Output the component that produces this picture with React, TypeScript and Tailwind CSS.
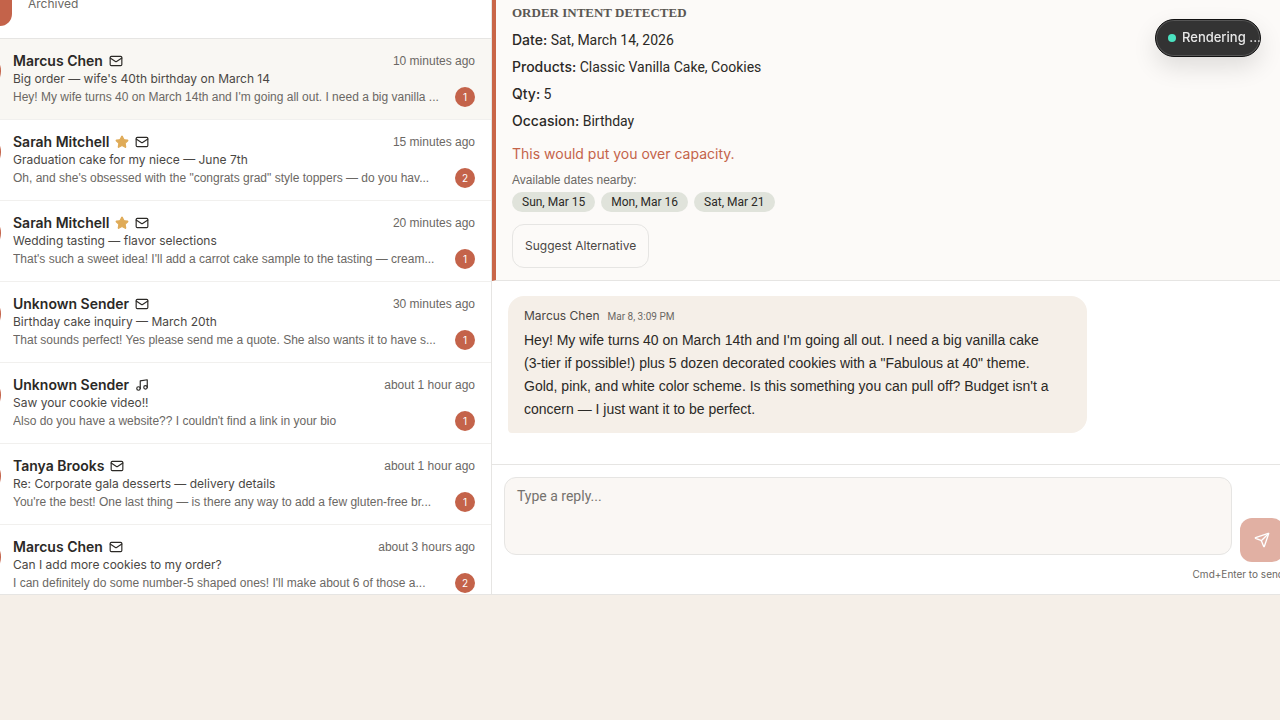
import React, { useState } from 'react';
import { Mail, Music, Send, Star } from 'lucide-react';

interface Conversation {
  id: number;
  sender: string;
  subject: string;
  preview: string;
  time: string;
  unread: number;
  vip?: boolean;
  channel: 'email' | 'tiktok';
}

const conversations: Conversation[] = [
  {
    id: 1,
    sender: 'Marcus Chen',
    subject: "Big order — wife's 40th birthday on March 14",
    preview: "Hey! My wife turns 40 on March 14th and I'm going all out. I need a big vanilla ...",
    time: '10 minutes ago',
    unread: 1,
    channel: 'email',
  },
  {
    id: 2,
    sender: 'Sarah Mitchell',
    subject: 'Graduation cake for my niece — June 7th',
    preview: 'Oh, and she\'s obsessed with the "congrats grad" style toppers — do you hav...',
    time: '15 minutes ago',
    unread: 2,
    vip: true,
    channel: 'email',
  },
  {
    id: 3,
    sender: 'Sarah Mitchell',
    subject: 'Wedding tasting — flavor selections',
    preview: "That's such a sweet idea! I'll add a carrot cake sample to the tasting — cream...",
    time: '20 minutes ago',
    unread: 1,
    vip: true,
    channel: 'email',
  },
  {
    id: 4,
    sender: 'Unknown Sender',
    subject: 'Birthday cake inquiry — March 20th',
    preview: 'That sounds perfect! Yes please send me a quote. She also wants it to have s...',
    time: '30 minutes ago',
    unread: 1,
    channel: 'email',
  },
  {
    id: 5,
    sender: 'Unknown Sender',
    subject: 'Saw your cookie video!!',
    preview: "Also do you have a website?? I couldn't find a link in your bio",
    time: 'about 1 hour ago',
    unread: 1,
    channel: 'tiktok',
  },
  {
    id: 6,
    sender: 'Tanya Brooks',
    subject: 'Re: Corporate gala desserts — delivery details',
    preview: "You're the best! One last thing — is there any way to add a few gluten-free br...",
    time: 'about 1 hour ago',
    unread: 1,
    channel: 'email',
  },
  {
    id: 7,
    sender: 'Marcus Chen',
    subject: 'Can I add more cookies to my order?',
    preview: "I can definitely do some number-5 shaped ones! I'll make about 6 of those a...",
    time: 'about 3 hours ago',
    unread: 2,
    channel: 'email',
  },
];

const orderDetails = [
  { label: 'Date', value: 'Sat, March 14, 2026' },
  { label: 'Products', value: 'Classic Vanilla Cake, Cookies' },
  { label: 'Qty', value: '5' },
  { label: 'Occasion', value: 'Birthday' },
];

const nearbyDates = ['Sun, Mar 15', 'Mon, Mar 16', 'Sat, Mar 21'];

const ConversationRow: React.FC<{ item: Conversation; active: boolean; onSelect: () => void }> = ({
  item,
  active,
  onSelect,
}) => {
  const ChannelIcon = item.channel === 'email' ? Mail : Music;

  return (
    <button
      type="button"
      onClick={onSelect}
      className={`flex w-full shrink-0 items-center gap-3 border-b border-[#f1f0ee] py-3 pr-4 pl-4 text-left ${
        active ? 'bg-[#f9f7f3]' : 'bg-white'
      }`}
    >
      <span className="-mt-4 size-10 shrink-0 rounded-full bg-[#c4634a]" />
      <span className="flex min-w-0 flex-1 flex-col">
        <span className="flex h-5 items-center">
          <span className="font-[Inter,sans-serif] text-sm font-semibold text-[#2b2926]">{item.sender}</span>
          {item.vip && <Star className="ml-1.5 size-3.5 fill-[#dfab58] text-[#dfab58]" />}
          <ChannelIcon className="ml-1.5 size-3.5 text-[#2b2926]" />
          <span className="ml-auto text-xs text-[#6b6864]">{item.time}</span>
        </span>
        <span className="truncate font-[Inter,sans-serif] text-xs text-[#4a4744]">{item.subject}</span>
        <span className="flex h-5 items-center gap-2">
          <span className="min-w-0 flex-1 truncate text-xs text-[#6b6864]">{item.preview}</span>
          <span className="flex size-5 shrink-0 items-center justify-center rounded-full bg-[#c4634a] font-[Inter,sans-serif] text-[10px] text-white">
            {item.unread}
          </span>
        </span>
      </span>
    </button>
  );
};

const OrderIntent: React.FC = () => (
  <section className="border-b border-l-4 border-b-[#e6e5e3] border-l-[#c96547] bg-[#fcfaf8] px-4 pt-[5px] pb-3">
    <h2 className="mb-2 font-['Liberation_Serif',serif] text-[13px] leading-4 font-bold text-[#5a5753]">
      ORDER INTENT DETECTED
    </h2>
    <div className="flex flex-col gap-[5px] font-[Roboto,sans-serif]">
      {orderDetails.map((row) => (
        <p key={row.label} className="text-sm leading-[22px] text-[#2b2926]">
          <span className="font-[Inter,sans-serif] font-medium">{row.label}:</span> {row.value}
        </p>
      ))}
    </div>
    <p className="mt-3 font-[Inter,sans-serif] text-sm text-[#c4634a]">This would put you over capacity.</p>
    <p className="mt-2 text-xs text-[#6b6864]">Available dates nearby:</p>
    <div className="mt-1 flex gap-1.5 font-[Roboto,sans-serif]">
      {nearbyDates.map((date) => (
        <span key={date} className="rounded-full bg-[#e0e3db] px-2.5 text-xs leading-5 text-[#2b2926]">
          {date}
        </span>
      ))}
    </div>
    <button
      type="button"
      className="mt-3 h-11 rounded-xl border border-[#e6e5e3] px-3 font-[Inter,sans-serif] text-xs text-[#4a4744]"
    >
      Suggest Alternative
    </button>
  </section>
);

const ReplyForm: React.FC = () => {
  const [reply, setReply] = useState('');

  return (
    <form className="border-t border-[#e6e5e3] p-3" onSubmit={(e) => e.preventDefault()}>
      <div className="flex items-end gap-2">
        <div className="h-[85px] min-w-0 flex-1">
          <textarea
            aria-label="Reply"
            placeholder="Type a reply..."
            value={reply}
            onChange={(e) => setReply(e.target.value)}
            className="block h-[78px] w-full resize-none rounded-xl border border-[#e6e5e3] bg-[#faf7f4] px-3 py-2 font-[Roboto,sans-serif] text-sm text-[#2b2926] placeholder:text-[#75726e]"
          />
        </div>
        <button
          type="submit"
          aria-label="Send reply"
          disabled={!reply}
          className="flex size-11 shrink-0 items-center justify-center rounded-xl bg-[#c4634a] text-white disabled:opacity-50"
        >
          <Send className="size-4" />
        </button>
      </div>
      <p className="mt-1 text-right font-[Inter,sans-serif] text-[10px] leading-4 text-[#6b6864]">Cmd+Enter to send</p>
    </form>
  );
};

export default function App() {
  const [selected, setSelected] = useState(1);

  return (
    <div className="min-h-screen overflow-hidden bg-[#f5efe8] font-['Liberation_Sans',sans-serif] text-[#2b2926]">
      <div className="-mr-4 -ml-[55px] flex h-[calc(100vh-125px)] border-b border-[#e6e5e3] bg-white">
        <aside className="flex w-[547px] shrink-0 flex-col overflow-hidden border-r border-[#e6e5e3]">
          <nav className="-mt-[18px] flex shrink-0 gap-1 border-b border-[#e6e5e3] px-4 pb-3">
            <button type="button" aria-label="All" className="h-11 w-[51px] rounded-xl bg-[#c4634a]" />
            <button type="button" className="h-11 rounded-xl px-3 font-[Inter,sans-serif] text-xs text-[#6b6864]">
              Archived
            </button>
          </nav>
          {conversations.map((item) => (
            <ConversationRow
              key={item.id}
              item={item}
              active={item.id === selected}
              onSelect={() => setSelected(item.id)}
            />
          ))}
        </aside>

        <main className="flex min-w-0 flex-1 flex-col">
          <OrderIntent />
          <div className="flex-1 px-4 pt-[15px]">
            <article className="max-w-[75%] rounded-2xl rounded-bl bg-[#f5efe8] px-4 py-3">
              <header className="mb-1 flex items-baseline gap-2">
                <span className="font-[Inter,sans-serif] text-xs text-[#4a4744]">Marcus Chen</span>
                <time className="font-[Roboto,sans-serif] text-[10px] leading-4 text-[#6b6864]">Mar 8, 3:09 PM</time>
              </header>
              <p className="text-sm leading-[23px]">
                Hey! My wife turns 40 on March 14th and I'm going all out. I need a big vanilla cake
                <br />
                (3-tier if possible!) plus 5 dozen decorated cookies with a "Fabulous at 40" theme.
                <br />
                Gold, pink, and white color scheme. Is this something you can pull off? Budget isn't a
                <br />
                concern — I just want it to be perfect.
              </p>
            </article>
          </div>
          <ReplyForm />
        </main>
      </div>

      <div
        role="status"
        className="fixed top-[19px] right-[19px] flex h-[38px] w-[106px] items-center gap-1.5 overflow-hidden rounded-full border border-[#111111] bg-[#333333] pl-3 font-[Inter,sans-serif] text-[13px] font-medium whitespace-nowrap text-[#e8e8e8] shadow-[0_10px_24px_rgba(0,0,0,0.12),inset_0_0_0_1px_#555555]"
      >
        <span className="size-2 shrink-0 rounded-full bg-[#4be3c1]" />
        Rendering ...
      </div>
    </div>
  );
}
